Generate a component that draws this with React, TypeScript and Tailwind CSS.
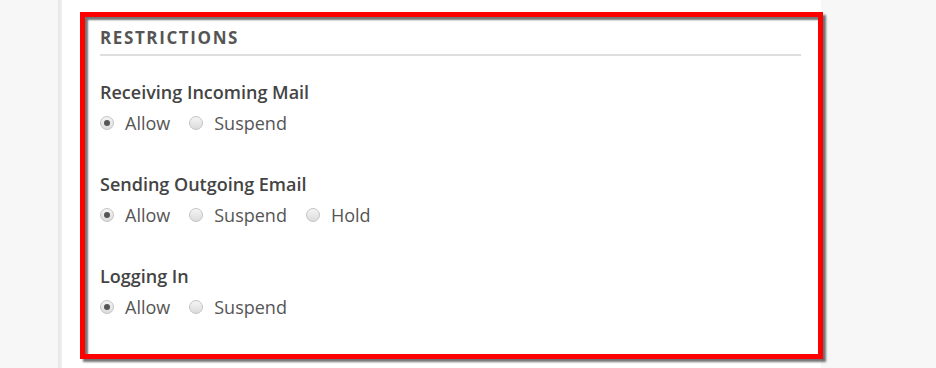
import React from "react";

function Radio({ checked }: { checked?: boolean }) {
  return (
    <span className="relative inline-flex h-[14px] w-[14px] shrink-0 items-center justify-center rounded-full border border-[#c4c4c4] bg-gradient-to-b from-[#f4f4f4] to-[#dcdcdc]">
      {checked && <span className="h-[6px] w-[6px] rounded-full bg-[#555]" />}
    </span>
  );
}

function Option({ label, checked }: { label: string; checked?: boolean }) {
  return (
    <label className="flex items-center gap-[11px]">
      <Radio checked={checked} />
      <span className="text-[18px] leading-[24px] text-[#555]">{label}</span>
    </label>
  );
}

function Group({ title, options, first }: { title: string; options: string[]; first?: boolean }) {
  return (
    <div className={first ? "mt-[24px]" : "mt-[37px]"}>
      <div className="text-[18px] font-semibold leading-[24px] text-[#444]">{title}</div>
      <div className="mt-[7px] flex items-center gap-[19px]">
        {options.map((o, i) => (
          <Option key={o} label={o} checked={i === 0} />
        ))}
      </div>
    </div>
  );
}

export default function App() {
  return (
    <div
      className="flex h-[368px] w-[936px] overflow-hidden bg-[#f7f7f7]"
      style={{ fontFamily: '"Open Sans", "Noto Sans", sans-serif' }}
    >
      <div className="w-[58px] shrink-0" />
      <div className="w-[4px] shrink-0 bg-gradient-to-r from-[#e6e6e6] to-[#efefef]" />
      <div className="w-[759px] shrink-0 bg-white pl-[18px] pt-[12px]">
        <div className="h-[347px] w-[743px] border-[5px] border-[#ff0000] px-[15px] pt-[11px] shadow-[3px_3px_2px_rgba(0,0,0,0.55),inset_3px_3px_2px_rgba(0,0,0,0.55)]">
          <div className="mr-[2px] border-b-2 border-[#dedede] pb-[6px] text-[17px] font-bold uppercase leading-[20px] tracking-[1.6px] text-[#555]">
            Restrictions
          </div>
          <Group first title="Receiving Incoming Mail" options={["Allow", "Suspend"]} />
          <Group title="Sending Outgoing Email" options={["Allow", "Suspend", "Hold"]} />
          <Group title="Logging In" options={["Allow", "Suspend"]} />
        </div>
      </div>
      <div className="flex-1" />
    </div>
  );
}
